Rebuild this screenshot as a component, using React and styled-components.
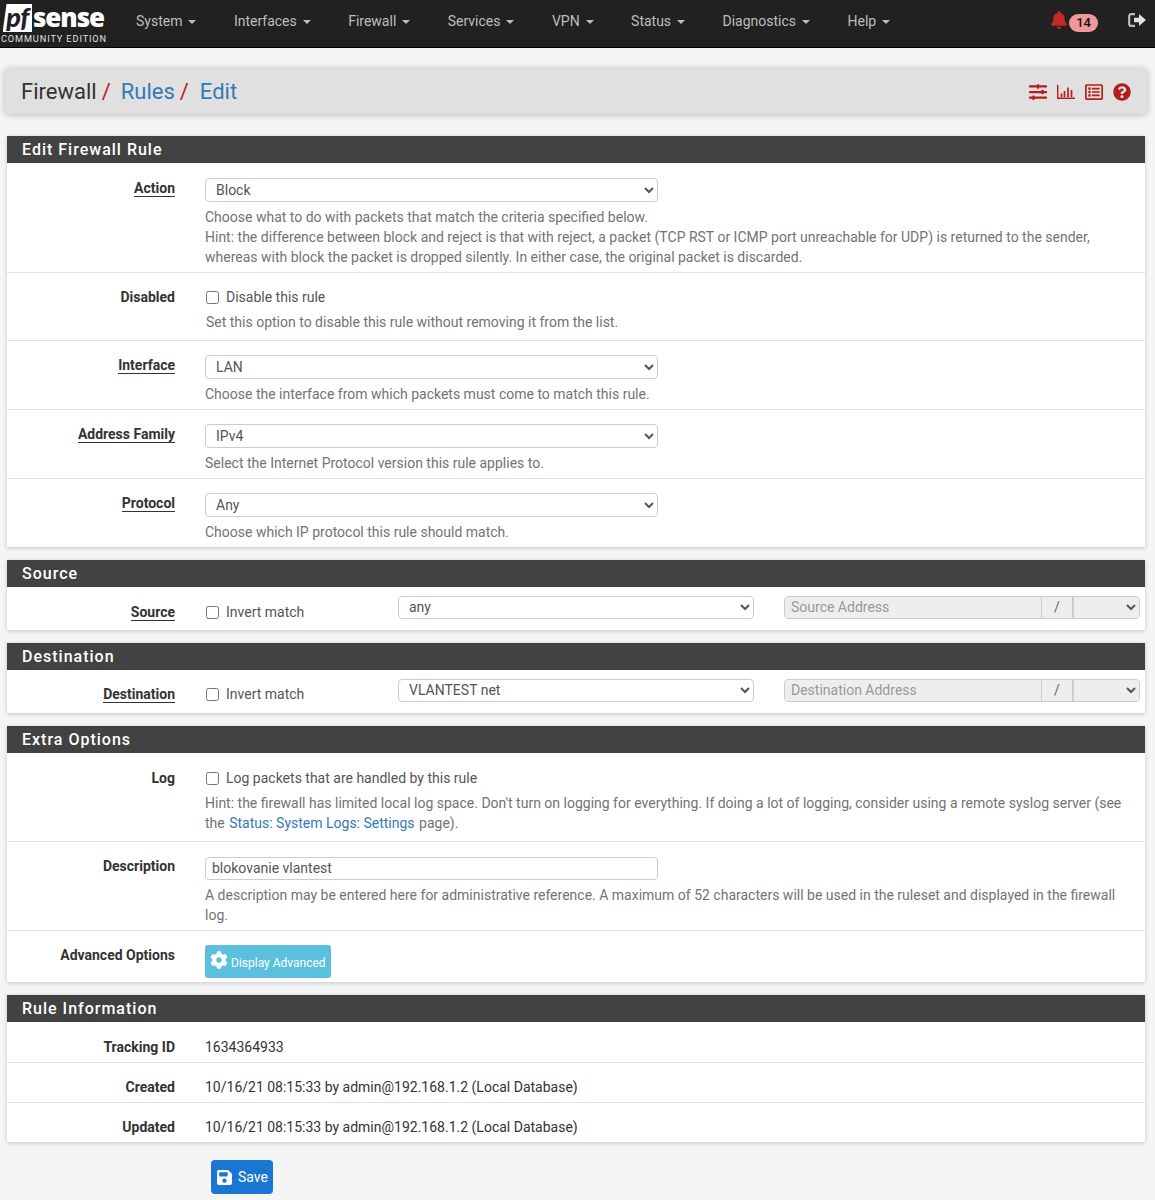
import React from 'react';
import styled, { createGlobalStyle } from 'styled-components';
import {
  FaBell,
  FaCog,
  FaQuestionCircle,
  FaRegListAlt,
  FaSave,
  FaSlidersH,
} from 'react-icons/fa';

const GlobalStyle = createGlobalStyle`
  * { box-sizing: border-box; }
  html, body { margin: 0; padding: 0; }
  body {
    background: #f5f5f5;
    font-family: Roboto, "Liberation Sans", sans-serif;
    font-size: 14px;
    line-height: 20px;
    color: #333;
  }
`;

const Navbar = styled.nav`
  height: 48px;
  background: #212121;
  border-bottom: 1px solid #000;
  display: flex;
  align-items: flex-start;
  overflow: hidden;
`;

const Logo = styled.div`
  width: 121px;
  height: 47px;
  padding: 3px 0 0 1px;
  flex: none;
`;

const LogoTop = styled.div`
  display: flex;
  align-items: flex-end;
  height: 29px;
  padding-left: 2px;
`;

const PfMark = styled.span`
  width: 29px;
  height: 28px;
  background: linear-gradient(98deg, transparent 3px, #fff 4px);
  color: #212121;
  font: italic 900 27px/26px Lato, sans-serif;
  letter-spacing: -0.5px;
  text-align: center;
`;

const SenseMark = styled.span`
  color: #fff;
  font: 800 26px/29px "Open Sans", sans-serif;
  letter-spacing: -1.1px;
  margin-left: 1px;
`;

const LogoEdition = styled.div`
  color: #e0e0e0;
  font-size: 9.2px;
  line-height: 11px;
  letter-spacing: 0.88px;
  margin-top: 1px;
  white-space: nowrap;
`;

const NavMenu = styled.ul`
  display: flex;
  list-style: none;
  margin: 0;
  padding: 0;
  flex: 1;
`;

const NavItem = styled.li`
  color: #bdbdbd;
  padding: 0 22.43px 0 15px;
  line-height: 43px;
  white-space: nowrap;
`;

const Caret = styled.span`
  display: inline-block;
  width: 0;
  height: 0;
  margin-left: 6px;
  vertical-align: middle;
  border-top: 4px solid #bdbdbd;
  border-left: 4px solid transparent;
  border-right: 4px solid transparent;
`;

const NavRight = styled.div`
  display: flex;
  align-items: center;
  height: 43px;
  padding-right: 9px;
  color: #bdbdbd;
`;

const Badge = styled.span`
  background: #ef9a9a;
  color: #111;
  font-size: 13px;
  font-weight: 500;
  line-height: 18px;
  height: 18px;
  border-radius: 9px;
  padding: 0 7px;
  margin: 2px 30px 0 1px;
`;

const BellIcon = styled(FaBell)`
  color: #c62828;
  font-size: 18px;
  margin-top: -3px;
`;

const LogoutSvg = styled.svg`
  width: 18px;
  height: 14px;
  margin-top: -3px;
`;

const Page = styled.main`
  padding: 20px 10px 0 7px;
`;

const Breadcrumb = styled.header`
  height: 46px;
  margin: 0 -2px 22px;
  padding: 1px 16px 0;
  background: #e0e0e0;
  border-radius: 3px;
  box-shadow: 0 1px 6px rgba(0, 0, 0, 0.25);
  display: flex;
  align-items: center;
  justify-content: space-between;
`;

const Crumbs = styled.h1`
  margin: 0;
  font-size: 22px;
  font-weight: 400;
  line-height: 45px;
  color: #333;
`;

const CrumbLink = styled.a`
  color: #337ab7;
  margin-left: ${(p) => p.$gap || 0}px;
`;

const Slash = styled.span`
  color: #b71c1c;
  margin-left: 5px;
`;

const Actions = styled.div`
  display: flex;
  align-items: center;
  gap: 10px;
  color: #b71c1c;
  font-size: 18px;
`;

const ChartSvg = styled.svg`
  width: 18px;
  height: 16px;
`;

const Panel = styled.section`
  background: #fff;
  box-shadow: 0 1px 4px rgba(0, 0, 0, 0.2);
  margin-bottom: 13px;
`;

const PanelHeading = styled.h2`
  margin: 0;
  height: 27px;
  padding: 0 15px;
  background: #424242;
  color: #fff;
  font-size: 16px;
  font-weight: 500;
  line-height: 27px;
  letter-spacing: 1px;
`;

const Row = styled.div`
  display: grid;
  grid-template-columns: 168px 1fr;
  column-gap: 30px;
  padding: ${(p) => p.$pad || '14px 0 5px'};
  border-bottom: 1px solid #e0e0e0;
  &:last-child { border-bottom: 0; }
`;

const Label = styled.div`
  text-align: right;
  font-weight: 700;
  color: #333;
  line-height: 20px;
  margin-top: ${(p) => p.$top || 0}px;
`;

const Required = styled.span`
  border-bottom: 1px solid #333;
  line-height: 16px;
  display: inline-block;
`;

const Field = styled.div`
  padding-right: 20px;
  min-width: 0;
`;

const SelectBox = styled.select`
  display: block;
  width: ${(p) => p.$width || 453}px;
  height: ${(p) => p.$height || 24}px;
  padding: 0 0 ${(p) => (p.$height ? 2 : 0)}px 6px;
  font: 14px Roboto, sans-serif;
  color: #555;
  background: #fff;
  border: 1px solid #ccc;
  border-radius: 4px;
  outline: 0;
`;

const TextInput = styled.input`
  display: block;
  width: 453px;
  height: 23px;
  padding: 0 6px 2px;
  font: 14px Roboto, sans-serif;
  color: #555;
  background: #fff;
  border: 1px solid #ccc;
  border-radius: 4px;
`;

const Help = styled.div`
  color: #737373;
  margin-top: 5px;
  padding-left: ${(p) => p.$indent || 0}px;
`;

const HelpLink = styled.a`
  color: #337ab7;
  margin: 0 1px;
`;

const CheckLine = styled.label`
  display: flex;
  align-items: center;
  height: 20px;
  color: #555;
  white-space: nowrap;
`;

const Check = styled.input.attrs({ type: 'checkbox' })`
  width: 13px;
  height: 13px;
  margin: 0 7px 0 1px;
`;

const AddressRow = styled.div`
  display: grid;
  grid-template-columns: 168px 163px 356px 356px;
  grid-auto-rows: 26px;
  column-gap: 30px;
  align-items: start;
  padding: 9px 0 8px;
`;

const InlineCheck = styled(CheckLine)`
  margin-top: ${(p) => p.$top}px;
`;

const AddressGroup = styled.div`
  display: flex;
  height: 23px;
  width: 356px;
  border: 1px solid #ccc;
  border-radius: 4px;
  background: #eee;
  color: #999;
  overflow: hidden;
`;

const AddressInput = styled.input`
  flex: 1;
  min-width: 0;
  border: 0;
  padding: 0 6px 2px;
  background: #eee;
  font: 14px Roboto, sans-serif;
  &::placeholder { color: #999; opacity: 1; }
`;

const AddressSlash = styled.span`
  width: 33px;
  flex: none;
  border-left: 1px solid #ccc;
  border-right: 2px solid #ccc;
  color: #666;
  text-align: center;
  line-height: 21px;
`;

const MaskSelect = styled.select`
  width: 65px;
  flex: none;
  border: 0;
  color: #555;
  background: #eee;
  font: 14px Roboto, sans-serif;
  outline: 0;
`;

const InfoButton = styled.button`
  display: inline-flex;
  align-items: center;
  gap: 3px;
  height: 33px;
  padding: 0 5px;
  background: #5bc0de;
  border: 0;
  border-radius: 3px;
  color: #fff;
  font: 12px Roboto, sans-serif;
  svg { font-size: 18px; margin-top: -3px; }
  span { margin-top: 2px; }
`;

const SaveButton = styled.button`
  display: inline-flex;
  align-items: center;
  gap: 5px;
  height: 34px;
  padding: 0 5px;
  margin: 5px 0 0 204px;
  background: #1976d2;
  border: 0;
  border-radius: 4px;
  color: #fff;
  font: 14px Roboto, sans-serif;
  svg { font-size: 17px; margin-top: 1px; }
`;

const menu = ['System', 'Interfaces', 'Firewall', 'Services', 'VPN', 'Status', 'Diagnostics', 'Help'];

const LogoutIcon = () => (
  <LogoutSvg viewBox="0 0 18 14">
    <path d="M7 1.2H3a1.8 1.8 0 0 0-1.8 1.8v8A1.8 1.8 0 0 0 3 12.8h4" fill="none" stroke="#b0bec5" strokeWidth="2.2" />
    <path d="M6 4.8h5V1l7 6-7 6V9.2H6z" fill="#e0e0e0" />
  </LogoutSvg>
);

const ChartIcon = () => (
  <ChartSvg viewBox="0 0 18 16">
    <path d="M.7 1v13.3H18" fill="none" stroke="currentColor" strokeWidth="1.4" />
    <path d="M4.5 13V9.5M7.5 13V7M11 13V3.5M14.5 13V6" fill="none" stroke="currentColor" strokeWidth="1.7" />
  </ChartSvg>
);

const Dropdown = ({ value, width, height }) => (
  <SelectBox $width={width} $height={height} defaultValue={value}>
    <option>{value}</option>
  </SelectBox>
);

const SelectRow = ({ label, value, hint }) => (
  <Row>
    <Label><Required>{label}</Required></Label>
    <Field>
      <Dropdown value={value} />
      <Help>{hint}</Help>
    </Field>
  </Row>
);

const AddressPanel = ({ title, value, placeholder, top }) => (
  <Panel>
    <PanelHeading>{title}</PanelHeading>
    <AddressRow>
      <Label $top={top}><Required>{title}</Required></Label>
      <InlineCheck $top={top}><Check />Invert match</InlineCheck>
      <Dropdown value={value} width={356} height={23} />
      <AddressGroup>
        <AddressInput placeholder={placeholder} disabled />
        <AddressSlash>/</AddressSlash>
        <MaskSelect><option></option></MaskSelect>
      </AddressGroup>
    </AddressRow>
  </Panel>
);

const InfoRow = ({ label, pad, children }) => (
  <Row $pad={pad}>
    <Label>{label}</Label>
    <Field>{children}</Field>
  </Row>
);

export default function App() {
  return (
    <>
      <GlobalStyle />
      <Navbar>
        <Logo>
          <LogoTop>
            <PfMark>pf</PfMark>
            <SenseMark>sense</SenseMark>
          </LogoTop>
          <LogoEdition>COMMUNITY EDITION</LogoEdition>
        </Logo>
        <NavMenu>
          {menu.map((item) => (
            <NavItem key={item}>{item}<Caret /></NavItem>
          ))}
        </NavMenu>
        <NavRight>
          <BellIcon />
          <Badge>14</Badge>
          <LogoutIcon />
        </NavRight>
      </Navbar>

      <Page>
        <Breadcrumb>
          <Crumbs>
            Firewall<Slash>/</Slash>
            <CrumbLink $gap={10}>Rules</CrumbLink><Slash>/</Slash>
            <CrumbLink $gap={11}>Edit</CrumbLink>
          </Crumbs>
          <Actions>
            <FaSlidersH />
            <ChartIcon />
            <FaRegListAlt />
            <FaQuestionCircle />
          </Actions>
        </Breadcrumb>

        <Panel>
          <PanelHeading>Edit Firewall Rule</PanelHeading>
          <Row $pad="15px 0 5px">
            <Label><Required>Action</Required></Label>
            <Field>
              <Dropdown value="Block" />
              <Help>
                Choose what to do with packets that match the criteria specified below.<br />
                Hint: the difference between block and reject is that with reject, a packet (TCP RST or ICMP port unreachable for UDP) is returned to the sender,<br />
                whereas with block the packet is dropped silently. In either case, the original packet is discarded.
              </Help>
            </Field>
          </Row>
          <Row $pad="14px 0 8px">
            <Label>Disabled</Label>
            <Field>
              <CheckLine><Check />Disable this rule</CheckLine>
              <Help $indent={1}>Set this option to disable this rule without removing it from the list.</Help>
            </Field>
          </Row>
          <SelectRow label="Interface" value="LAN" hint="Choose the interface from which packets must come to match this rule." />
          <SelectRow label="Address Family" value="IPv4" hint="Select the Internet Protocol version this rule applies to." />
          <SelectRow label="Protocol" value="Any" hint="Choose which IP protocol this rule should match." />
        </Panel>

        <AddressPanel title="Source" value="any" placeholder="Source Address" top={6} />
        <AddressPanel title="Destination" value="VLANTEST net" placeholder="Destination Address" top={5} />

        <Panel>
          <PanelHeading>Extra Options</PanelHeading>
          <Row $pad="15px 0 8px">
            <Label>Log</Label>
            <Field>
              <CheckLine><Check />Log packets that are handled by this rule</CheckLine>
              <Help>
                Hint: the firewall has limited local log space. Don't turn on logging for everything. If doing a lot of logging, consider using a remote syslog server (see<br />
                the <HelpLink>Status: System Logs: Settings</HelpLink> page).
              </Help>
            </Field>
          </Row>
          <Row $pad="15px 0 5px">
            <Label $top={-1}>Description</Label>
            <Field>
              <TextInput defaultValue="blokovanie vlantest" />
              <Help>
                A description may be entered here for administrative reference. A maximum of 52 characters will be used in the ruleset and displayed in the firewall log.
              </Help>
            </Field>
          </Row>
          <Row $pad="14px 0 4px">
            <Label>Advanced Options</Label>
            <Field>
              <InfoButton><FaCog /><span>Display Advanced</span></InfoButton>
            </Field>
          </Row>
        </Panel>

        <Panel>
          <PanelHeading>Rule Information</PanelHeading>
          <InfoRow label="Tracking ID" pad="15px 0 5px">1634364933</InfoRow>
          <InfoRow label="Created">10/16/21 08:15:33 by admin@192.168.1.2 (Local Database)</InfoRow>
          <InfoRow label="Updated">10/16/21 08:15:33 by admin@192.168.1.2 (Local Database)</InfoRow>
        </Panel>

        <SaveButton><FaSave /> Save</SaveButton>
      </Page>
    </>
  );
}
